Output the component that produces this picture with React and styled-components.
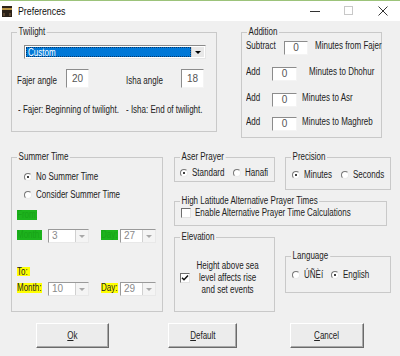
import React from "react";
import styled, { createGlobalStyle } from "styled-components";

const GlobalStyle = createGlobalStyle`
  html, body {
    margin: 0;
    padding: 0;
    background: #f0f0f0;
  }
`;

// the dialog font is narrow, so text is squeezed horizontally
const squeeze = `
  transform: scaleX(0.8);
  transform-origin: 0 50%;
`;

const Window = styled.div`
  width: 400px;
  height: 356px;
  background: #f0f0f0;
  font-family: "Liberation Sans", Arial, sans-serif;
  font-size: 10px;
  color: #222;
  overflow: hidden;
`;

const TitleBar = styled.div`
  height: 20px;
  background: #fff;
  border-top: 1px solid #9cc37a;
  display: flex;
  align-items: center;
  padding-left: 2px;
`;

const Title = styled.span`
  font-size: 11px;
  color: #111;
  margin-left: 6px;
  flex: 1;
  ${squeeze}
`;

const WinButton = styled.div`
  width: 34px;
  height: 20px;
  display: flex;
  align-items: center;
  justify-content: center;
`;

const Body = styled.div`
  padding: 11px 0 0 11px;
`;

const Row = styled.div`
  display: flex;
  align-items: flex-start;
  gap: ${(p) => p.gap || 0}px;
  margin-top: ${(p) => p.top || 0}px;
`;

const Column = styled.div`
  display: flex;
  flex-direction: column;
`;

const Group = styled.div`
  position: relative;
  box-sizing: border-box;
  width: ${(p) => p.w}px;
  height: ${(p) => p.h}px;
  margin-top: ${(p) => p.top || 0}px;
  border: 1px solid #c9c9c9;
  padding-top: ${(p) => p.padTop || 0}px;
`;

const Legend = styled.span`
  position: absolute;
  top: -7px;
  left: 5px;
  padding: 0 2px;
  line-height: 12px;
  white-space: nowrap;
  background: #f0f0f0;
  color: #222;
  ${squeeze}
`;

const Combo = styled.div`
  box-sizing: border-box;
  width: 182px;
  height: 14px;
  margin-left: 12px;
  background: #fff;
  border: 1px solid;
  border-color: #8a8a8a #e6e6e6 #e6e6e6 #8a8a8a;
  display: flex;
  padding: 1px;
`;

const ComboValue = styled.div`
  flex: 1;
  background: #0078d7;
  color: #fff;
  line-height: 10px;
  padding-left: 2px;
  outline: 1px dotted #05386b;
  outline-offset: -1px;
`;

const DropButton = styled.div`
  width: 12px;
  background: ${(p) => (p.disabled ? "#f4f4f4" : "#e8e8e8")};
  border-left: 1px solid #d0d0d0;
  display: flex;
  align-items: center;
  justify-content: center;
  &::after {
    content: "";
    border-left: 3px solid transparent;
    border-right: 3px solid transparent;
    border-top: 3px solid ${(p) => (p.disabled ? "#a8a8a8" : "#000")};
  }
`;

const Text = styled.span`
  display: inline-block;
  flex: none;
  width: ${(p) => (p.w ? `${p.w}px` : "auto")};
  margin-left: ${(p) => p.ml || 0}px;
  margin-top: ${(p) => p.mt || 0}px;
  line-height: 12px;
  white-space: nowrap;
  ${squeeze}
`;

const Field = styled.div`
  box-sizing: border-box;
  flex: none;
  width: ${(p) => p.w}px;
  height: ${(p) => p.h}px;
  background: #fff;
  border: 1px solid;
  border-color: #8c8c8c #f4f4f4 #f4f4f4 #8c8c8c;
  color: #555;
  line-height: 12px;
  text-align: center;
  padding-top: ${(p) => p.pt || 0}px;
`;

const Select = styled.div`
  box-sizing: border-box;
  width: ${(p) => p.w}px;
  height: 14px;
  margin-left: ${(p) => p.ml || 0}px;
  background: #fff;
  border: 1px solid;
  border-color: #9a9a9a #e8e8e8 #e8e8e8 #9a9a9a;
  display: flex;
  color: #8a8a8a;
  line-height: 12px;
`;

const SelectValue = styled.span`
  flex: 1;
  padding-left: 3px;
`;

const Tag = styled.span`
  display: inline-block;
  flex: none;
  width: ${(p) => p.w}px;
  height: ${(p) => p.h || 10}px;
  line-height: ${(p) => p.h || 10}px;
  margin-left: ${(p) => p.ml || 0}px;
  margin-top: ${(p) => p.mt || 0}px;
  background: ${(p) => (p.green ? "#1db31d" : "#ffff00")};
  color: ${(p) => (p.green ? "#17a317" : "#222")};
  white-space: nowrap;
  overflow: hidden;
  & > span {
    display: inline-block;
    ${squeeze}
  }
`;

const OptionRow = styled.div`
  display: flex;
  align-items: center;
  height: 12px;
  margin-top: ${(p) => p.top || 0}px;
  margin-left: ${(p) => p.left || 0}px;
`;

const Radio = styled.span`
  position: relative;
  box-sizing: border-box;
  flex: none;
  width: 8px;
  height: 8px;
  border-radius: 50%;
  border: 1px solid;
  border-color: #777 #eaeaea #eaeaea #777;
  background: #fff;
  margin-left: ${(p) => p.ml || 0}px;
  margin-right: 4px;
  &::after {
    content: "";
    display: ${(p) => (p.checked ? "block" : "none")};
    position: absolute;
    left: 2px;
    top: 2px;
    width: 2px;
    height: 2px;
    border-radius: 50%;
    background: #000;
  }
`;

const Check = styled.span`
  box-sizing: border-box;
  flex: none;
  width: 10px;
  height: 10px;
  border: 1px solid;
  border-color: #6e6e6e #e2e2e2 #e2e2e2 #6e6e6e;
  background: #fff;
  margin-right: 4px;
  display: flex;
  align-items: center;
  justify-content: center;
`;

const ElevationRow = styled.div`
  display: flex;
  align-items: center;
  margin-top: 22px;
  margin-left: 5px;
`;

const ElevationText = styled.div`
  flex: none;
  width: 84px;
  text-align: center;
  line-height: 12px;
  white-space: nowrap;
  ${squeeze}
`;

const ButtonRow = styled.div`
  display: flex;
  margin-top: 11px;
  padding-left: 25px;
`;

const Button = styled.div`
  box-sizing: border-box;
  width: ${(p) => p.w}px;
  height: 25px;
  margin-left: ${(p) => p.ml || 0}px;
  background: #ececec;
  border: 1px solid;
  border-color: #fff #6a6a6a #6a6a6a #fff;
  box-shadow: inset -1px -1px 0 #a9a9a9;
  display: flex;
  align-items: center;
  justify-content: center;
  color: #222;
  & > span {
    display: inline-block;
    transform: scaleX(0.8);
  }
`;

const KaabaIcon = () => (
  <svg width="10" height="11" viewBox="0 0 10 11">
    <rect x="0" y="0" width="10" height="11" fill="#2a2118" />
    <rect x="0" y="2" width="10" height="2" fill="#b89445" />
    <rect x="1" y="7" width="2" height="3" fill="#5a4630" />
    <rect x="7" y="7" width="2" height="3" fill="#5a4630" />
  </svg>
);

const CheckMark = () => (
  <svg width="8" height="8" viewBox="0 0 8 8">
    <path d="M1 3.8 L3 5.8 L7 1.6" stroke="#111" strokeWidth="1.5" fill="none" />
  </svg>
);

const DateSelect = ({ w, ml, value }) => (
  <Select w={w} ml={ml}>
    <SelectValue>{value}</SelectValue>
    <DropButton disabled />
  </Select>
);

const App = () => {
  return (
    <>
      <GlobalStyle />
      <Window>
        <TitleBar>
          <KaabaIcon />
          <Title>Preferences</Title>
          <WinButton>
            <svg width="10" height="10" viewBox="0 0 10 10">
              <line x1="0" y1="5.5" x2="10" y2="5.5" stroke="#333" strokeWidth="1" />
            </svg>
          </WinButton>
          <WinButton>
            <svg width="10" height="10" viewBox="0 0 10 10">
              <rect x="0.5" y="0.5" width="8" height="8" stroke="#c8c8c8" fill="none" />
            </svg>
          </WinButton>
          <WinButton>
            <svg width="10" height="10" viewBox="0 0 10 10">
              <path d="M0.5 0.5 L9.5 9.5 M9.5 0.5 L0.5 9.5" stroke="#333" strokeWidth="1" />
            </svg>
          </WinButton>
        </TitleBar>

        <Body>
          <Row gap={24}>
            <Group w={206} h={100} padTop={12}>
              <Legend>Twilight</Legend>
              <Combo>
                <ComboValue>
                  <Text>Custom</Text>
                </ComboValue>
                <DropButton />
              </Combo>
              <Row top={10}>
                <Text w={49} ml={5} mt={6}>Fajer angle</Text>
                <Field w={23} h={19} pt={3}>20</Field>
                <Text w={55} ml={37} mt={6}>Isha angle</Text>
                <Field w={23} h={19} pt={3}>18</Field>
              </Row>
              <Row top={16}>
                <Text w={108} ml={6}>- Fajer: Beginning of twilight.</Text>
                <Text>- Isha: End of twilight.</Text>
              </Row>
            </Group>

            <Group w={141} h={106} padTop={8}>
              <Legend>Addition</Legend>
              <Column>
                <Row>
                  <Text w={38} ml={4} mt={-1}>Subtract</Text>
                  <Field w={24} h={14}>0</Field>
                  <Text ml={7} mt={-1}>Minutes from Fajer</Text>
                </Row>
                <Row top={12}>
                  <Text w={26} ml={4} mt={-1}>Add</Text>
                  <Field w={25} h={14}>0</Field>
                  <Text ml={12} mt={-1}>Minutes to Dhohur</Text>
                </Row>
                <Row top={12}>
                  <Text w={26} ml={4} mt={-1}>Add</Text>
                  <Field w={25} h={14}>0</Field>
                  <Text ml={5} mt={-1}>Minutes to Asr</Text>
                </Row>
                <Row top={10}>
                  <Text w={26} ml={4} mt={-1}>Add</Text>
                  <Field w={25} h={14}>0</Field>
                  <Text ml={5} mt={-1}>Minutes to Maghreb</Text>
                </Row>
              </Column>
            </Group>
          </Row>

          <Row gap={11} top={19}>
            <Group w={152} h={155}>
              <Legend>Summer Time</Legend>
              <OptionRow top={13} left={12}>
                <Radio checked />
                <Text>No Summer Time</Text>
              </OptionRow>
              <OptionRow top={6} left={12}>
                <Radio />
                <Text>Consider Summer Time</Text>
              </OptionRow>
              <Tag green w={20} ml={5} mt={9}>
                <span>From:</span>
              </Tag>
              <Row top={7}>
                <Tag green w={25} ml={5} mt={1}>
                  <span>Month:</span>
                </Tag>
                <DateSelect w={41} ml={6} value="3" />
                <Tag green w={17} ml={12} mt={1}>
                  <span>Day:</span>
                </Tag>
                <DateSelect w={36} ml={2} value="27" />
              </Row>
              <Tag w={13} h={9} ml={5} mt={24}>
                <span>To:</span>
              </Tag>
              <Row top={4}>
                <Tag w={25} ml={5} mt={1}>
                  <span>Month:</span>
                </Tag>
                <DateSelect w={41} ml={6} value="10" />
                <Tag w={17} ml={12} mt={1}>
                  <span>Day:</span>
                </Tag>
                <DateSelect w={36} ml={2} value="29" />
              </Row>
            </Group>

            <Column>
              <Row gap={10}>
                <Group w={101} h={25}>
                  <Legend>Aser Prayer</Legend>
                  <OptionRow top={9} left={5}>
                    <Radio checked />
                    <Text w={37}>Standard</Text>
                    <Radio ml={4} />
                    <Text>Hanafi</Text>
                  </OptionRow>
                </Group>
                <Group w={106} h={33}>
                  <Legend>Precision</Legend>
                  <OptionRow top={11} left={6}>
                    <Radio checked />
                    <Text w={33}>Minutes</Text>
                    <Radio ml={4} />
                    <Text>Seconds</Text>
                  </OptionRow>
                </Group>
              </Row>

              <Group w={213} h={25} top={11}>
                <Legend>High Latitude Alternative Prayer Times</Legend>
                <OptionRow top={5} left={6}>
                  <Check />
                  <Text>Enable Alternative Prayer Time Calculations</Text>
                </OptionRow>
              </Group>

              <Row gap={10} top={11}>
                <Group w={101} h={75}>
                  <Legend>Elevation</Legend>
                  <ElevationRow>
                    <Check>
                      <CheckMark />
                    </Check>
                    <ElevationText>
                      Height above sea
                      <br />
                      level affects rise
                      <br />
                      and set events
                    </ElevationText>
                  </ElevationRow>
                </Group>
                <Group w={106} h={37} top={19}>
                  <Legend>Language</Legend>
                  <OptionRow top={12} left={6}>
                    <Radio />
                    <Text w={24}>ÚÑÈí</Text>
                    <Radio ml={3} checked />
                    <Text>English</Text>
                  </OptionRow>
                </Group>
              </Row>
            </Column>
          </Row>

          <ButtonRow>
            <Button w={73}>
              <span>
                <u>O</u>k
              </span>
            </Button>
            <Button w={69} ml={59}>
              <span>
                <u>D</u>efault
              </span>
            </Button>
            <Button w={74} ml={53}>
              <span>
                <u>C</u>ancel
              </span>
            </Button>
          </ButtonRow>
        </Body>
      </Window>
    </>
  );
};

export default App;
